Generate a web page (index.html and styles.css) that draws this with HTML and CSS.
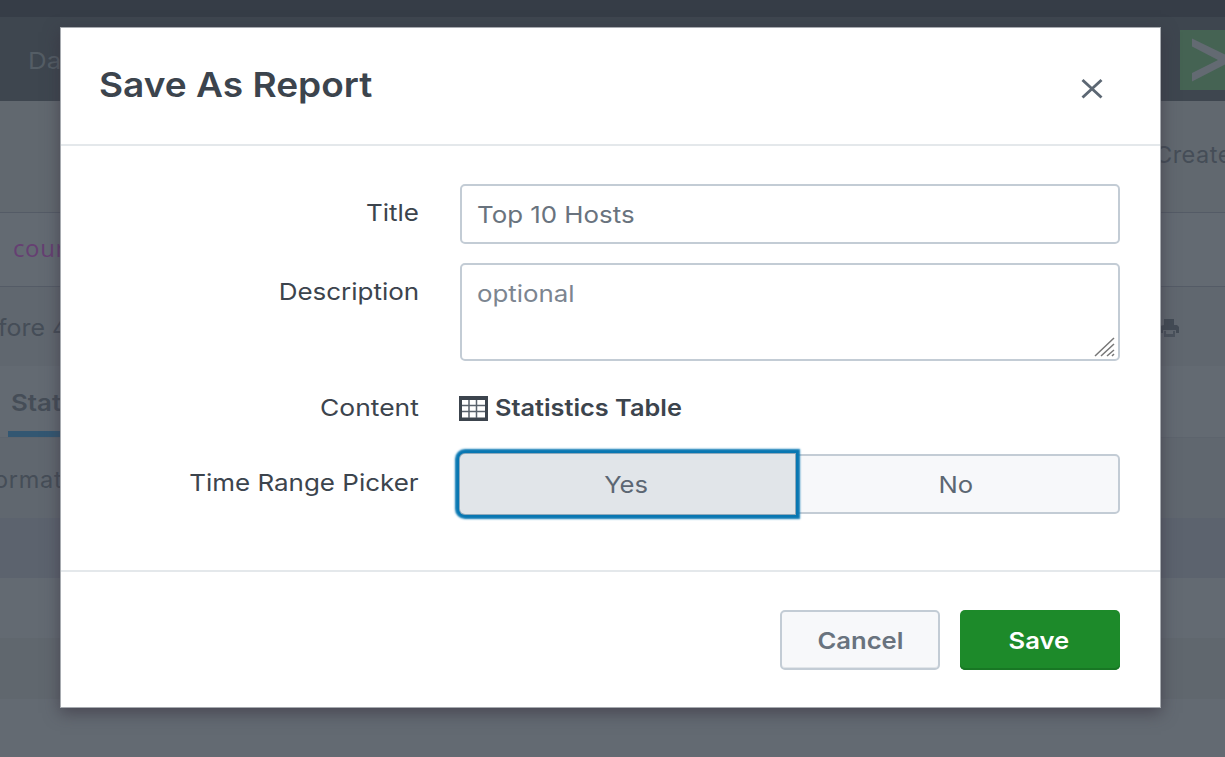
FILE: index.html
```html
<!DOCTYPE html>
<html lang="en">
<head>
<meta charset="utf-8">
<title>Save As Report</title>
<link rel="stylesheet" href="styles.css">
</head>
<body>
<div class="page">
  <div class="topbar"></div>
  <div class="appnav"><span class="nav-item wide">Da</span>
    <svg class="app-logo" width="45" height="60" viewBox="0 0 45 60"><rect width="45" height="60" fill="#456353"/><path d="M12 8.500L46 25V34L12 51.500V43L38 30L12 16.500Z" fill="#636a72"/></svg>
  </div>
  <div class="band heading"><span class="create">Create</span></div>
  <div class="band search"><span class="command">coun</span></div>
  <div class="band job"><span class="before wide">fore 4</span>
    <svg class="printer" width="20" height="20" viewBox="0 0 20 20"><path d="M4 1H14V7H17L19 9V15H16V12H3V15H0V8L4 7Z" fill="#434b55"/><path d="M4 13H15V19H4Z" fill="#4a525c"/><path d="M6 13H13V16H6Z" fill="#626971"/></svg>
  </div>
  <div class="band tabs"><span class="tab"><span class="wide">Stat</span></span></div>
  <div class="band format"><span>ormat</span></div>
  <div class="row head"></div>
  <div class="row light"></div>
  <div class="row dark"></div>
  <div class="row rest"></div>
</div>
<section class="modal" role="dialog" aria-labelledby="modal-title">
  <header class="modal-header">
    <h1 id="modal-title">Save As Report</h1>
    <button class="close" aria-label="Close"><svg width="24" height="24" viewBox="0 0 24 24"><path d="M2.500 3L21.500 20.500M21.500 3L2.500 20.500" stroke="#5c6773" stroke-width="2.900"/></svg></button>
  </header>
  <div class="modal-body">
    <div class="field title-row"><span class="label l-title">Title</span><div class="input"><span class="wide t-hosts">Top 10 Hosts</span></div></div>
    <div class="field desc-row"><span class="label l-desc">Description</span><div class="textarea"><span class="wide t-opt">optional</span>
      <svg class="grip" width="22" height="20" viewBox="0 0 22 20"><path d="M1 19L20 1M7 19L20 7M13 19L20 13M18 19L20 17" stroke="#777" stroke-width="1.500"/></svg></div></div>
    <div class="field content-row"><span class="label l-content">Content</span><div class="content">
      <svg width="29" height="25" viewBox="0 0 29 25"><path d="M0 0H29V25H0Z" fill="#3c444d"/><path d="M3 4H26V21.500H3Z" fill="#fff"/><path d="M10 4V22M17.500 4V22M3 9.500H26M3 15.500H26" stroke="#59626c" stroke-width="1.500"/></svg>
      <span class="wide t-stat">Statistics Table</span></div></div>
    <div class="field time-row"><span class="label l-time">Time Range Picker</span><div class="toggle"><button class="yes"><span class="mid">Yes</span></button><button class="no"><span class="mid">No</span></button></div></div>
  </div>
  <footer class="modal-footer"><button class="btn cancel"><span class="mid">Cancel</span></button><button class="btn save"><span class="mid">Save</span></button></footer>
</section>
</body>
</html>
```
FILE: styles.css
```css
* { box-sizing: border-box; }
body { margin: 0; width: 1225px; height: 757px; overflow: hidden; position: relative; font-family: Inter, "Open Sans", sans-serif; font-size: 23.5px; color: #3c444d; }
button { font: inherit; color: inherit; border: 0; padding: 0; margin: 0; background: none; }
svg { display: block; flex: none; }
.wide { display: inline-block; transform: scaleX(1.1); transform-origin: left center; }
.mid { display: inline-block; transform: scaleX(1.09); }
.page { height: 757px; display: flex; flex-direction: column; background: #636a72; color: #454d57; white-space: nowrap; overflow: hidden; }
.page > div { flex: none; }
.topbar { height: 17px; background: #363d47; }
.appnav { height: 84px; padding-left: 28px; background: #3e464f; display: flex; justify-content: space-between; align-items: center; }
.nav-item { color: #545d65; margin-top: 3px; }
.app-logo { margin-top: 2px; }
.band { display: flex; align-items: center; border-bottom: 1px solid #545b66; }
.heading { height: 112px; background: #61686f; padding: 0 0 4px 1155px; }
.create { letter-spacing: .5px; }
.search { height: 74px; padding: 0 0 5px 13px; }
.command { color: #663f72; font-family: "Open Sans", sans-serif; font-size: 24px; letter-spacing: .6px; }
.job { height: 79px; background: #60676f; border-color: #60676f; justify-content: space-between; padding: 2px 45px 0 0; }
.before { margin-left: -2px; transform: scaleX(1.06); }
.printer { margin-top: 2px; }
.tabs { height: 72px; padding-left: 8px; border-color: #5d646d; align-items: stretch; }
.tab { height: 71px; width: 200px; padding: 0 3px; border-bottom: 6px solid #335772; font-weight: 600; line-height: 73px; }
.format { height: 80px; background: #60676f; border-color: #60676f; }
.format span { margin-left: -6px; padding-top: 4px; letter-spacing: .7px; }
.head { height: 60px; background: #5c636e; }
.light { height: 60px; }
.dark { height: 61px; background: #60676e; }
.modal { position: absolute; left: 60px; top: 27px; width: 1101px; height: 681px; background: #fff; border: 1px solid #a7abb0; box-shadow: 0 5px 15px rgba(55, 48, 62, .6); display: flex; flex-direction: column; background-clip: padding-box; }
.modal-header { height: 118px; flex: none; border-bottom: 2px solid #e4e8eb; display: flex; justify-content: space-between; padding: 35px 56px 0 38px; }
h1 { margin: 0; font-size: 34px; font-weight: 600; line-height: 44px; white-space: nowrap; transform: scaleX(1.09); transform-origin: left center; }
.close { height: 24px; margin-top: 14px; }
.modal-body { height: 426px; flex: none; padding: 38px 40px 0 39px; border-bottom: 2px solid #e4e8eb; }
.field { display: grid; grid-template-columns: 319px 660px; column-gap: 41px; }
.label { justify-self: end; line-height: 57px; white-space: nowrap; transform: scaleX(1.105); transform-origin: right center; }
.l-content { transform: scaleX(1.125); }
.input, .textarea { border: 2px solid #c3ccd5; border-radius: 5px; color: #69737e; padding: 0 15px; }
.input { height: 60px; line-height: 58px; }
.title-row { height: 79px; }
.desc-row { height: 113px; }
.textarea { height: 98px; line-height: 58px; position: relative; color: #7c8590; }
.grip { position: absolute; right: 2px; bottom: 2px; }
.content-row { height: 78px; }
.content-row .label { line-height: 64px; }
.content { display: flex; align-items: center; gap: 7px; height: 64px; font-weight: 600; margin-left: -1px; }
.t-stat { transform: scaleX(1.077); margin-top: -1px; }
.toggle { height: 60px; display: flex; color: #5c6773; }
.toggle button { height: 60px; }
.yes { width: 335px; background: #e1e5e9; border-radius: 5px 0 0 5px; box-shadow: 0 0 0 1px #8fa9bb, 0 0 2px 5px #0877b2; position: relative; }
.toggle .yes, .toggle .no { padding-right: 3px; }
.toggle .no { flex: 1; background: #f7f8fa; border: 2px solid #c3ccd5; border-radius: 0 5px 5px 0; }
.modal-footer { padding: 38px 40px 0 0; display: flex; justify-content: flex-end; gap: 20px; }
.btn { width: 160px; height: 60px; border-radius: 5px; font-weight: 600; }
.cancel { background: #f7f8fa; border: 2px solid #c3ccd5; box-shadow: inset 0 -1px #e1e5e9; color: #69737e; }
.save { background: #1d8a2a; color: #fff; box-shadow: inset 0 -2px #187724; padding-right: 2px; }
```
